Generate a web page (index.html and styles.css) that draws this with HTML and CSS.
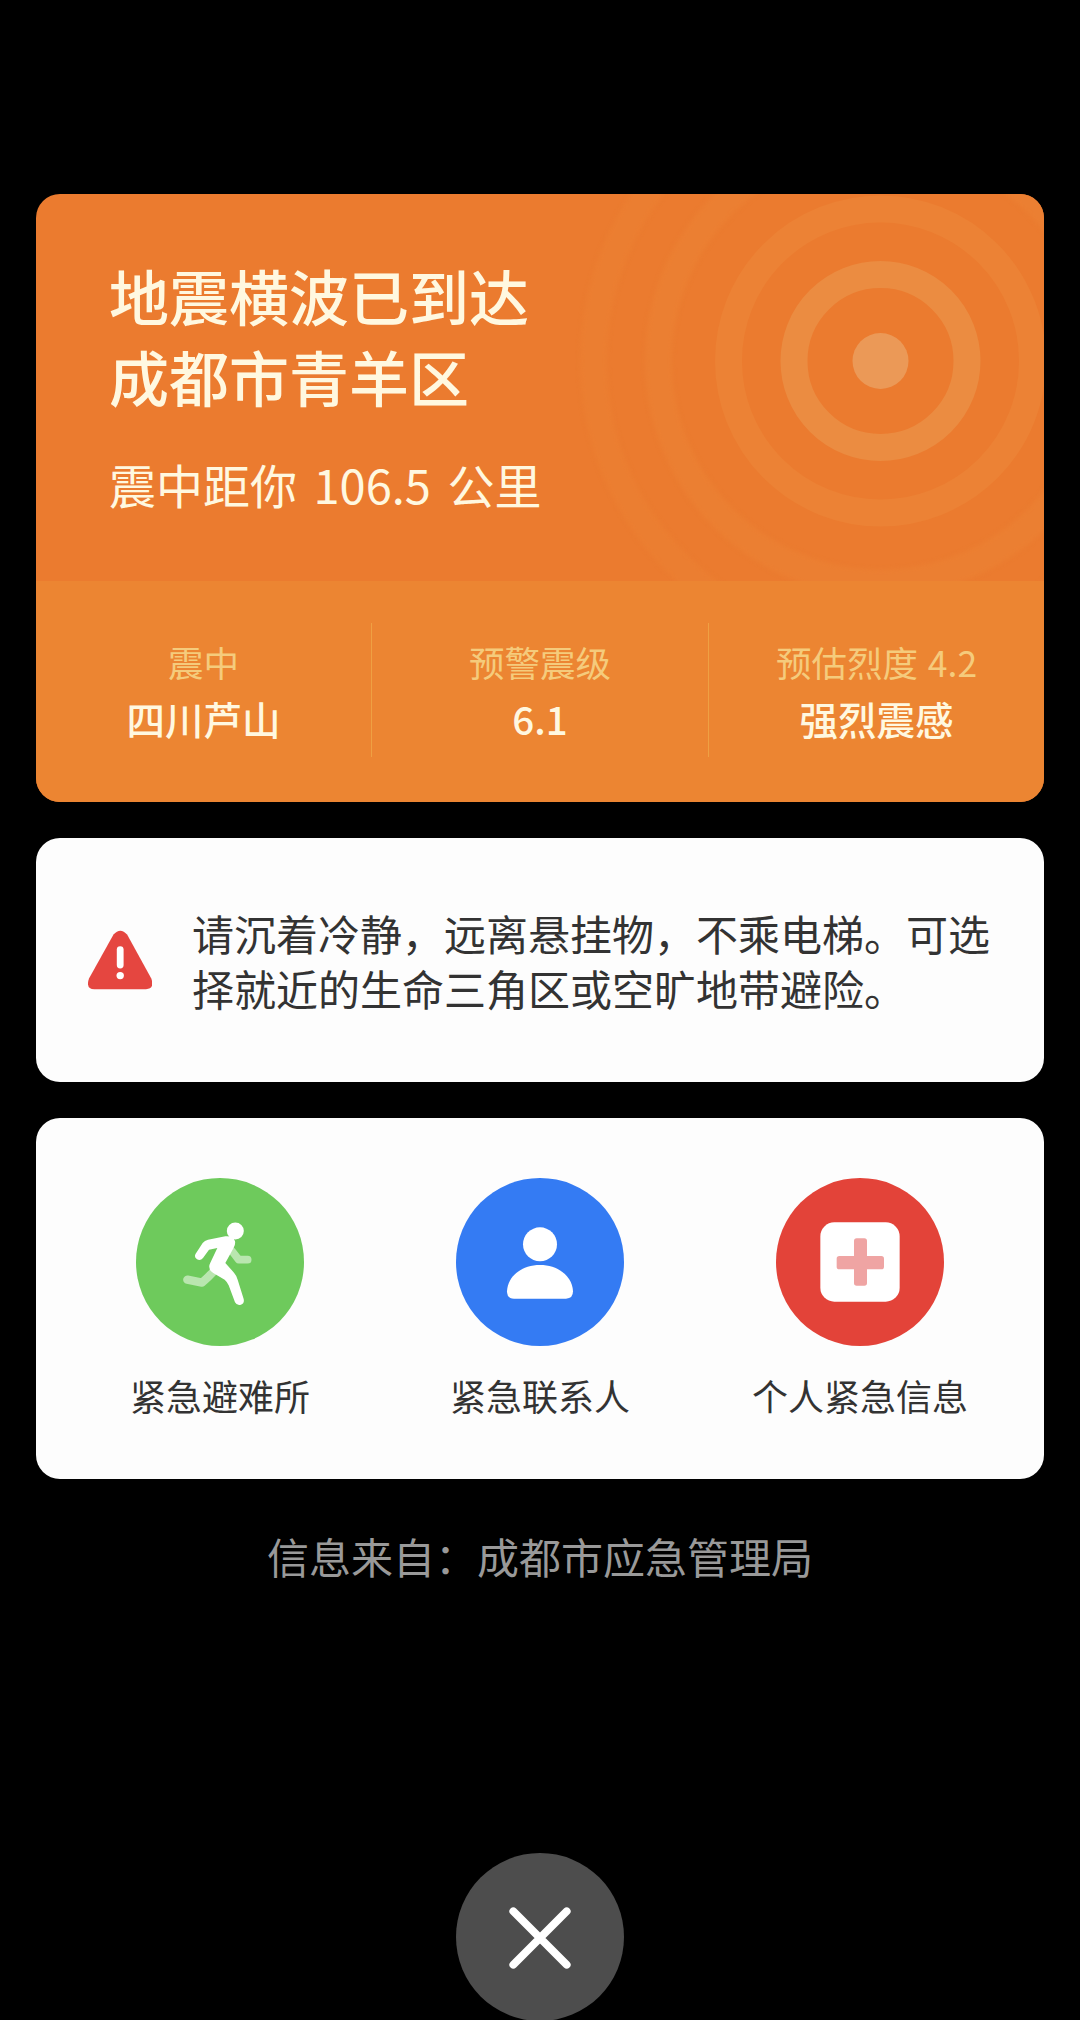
FILE: index.html
```html
<!DOCTYPE html>
<html lang="zh-CN">
<head>
<meta charset="utf-8">
<title>地震预警</title>
<link rel="stylesheet" href="styles.css">
</head>
<body>
<main class="screen">
  <section class="quake">
    <svg class="waves" viewBox="0 0 1008 387" aria-hidden="true">
      <circle class="wave wave-4" cx="844.5" cy="167" r="287"/>
      <circle class="wave wave-3" cx="844.5" cy="167" r="222"/>
      <circle class="wave wave-2" cx="844.5" cy="167" r="152"/>
      <circle class="wave wave-1" cx="844.5" cy="167" r="86.5"/>
      <circle class="core" cx="844.5" cy="167" r="28"/>
    </svg>
    <header class="summary">
      <h1 class="title">地震横波已到达<br>成都市青羊区</h1>
      <p class="distance">震中距你 106.5 公里</p>
    </header>
    <dl class="stats">
      <div class="stat"><dt>震中</dt><dd>四川芦山</dd></div>
      <div class="stat"><dt>预警震级</dt><dd>6.1</dd></div>
      <div class="stat"><dt>预估烈度 4.2</dt><dd>强烈震感</dd></div>
    </dl>
  </section>

  <section class="advice">
    <svg class="alert-icon" viewBox="88 930 64 60" aria-hidden="true">
      <path fill="#e54640" d="M113.500 934.500Q120.300 926.800 127.100 934.500L151.300 978.500Q154.900 988.800 146 989.200H94.300Q85.400 988.800 89 978.500Z"/>
      <path stroke="#fff" stroke-width="6.800" stroke-linecap="round" d="M120.200 949.600V965"/>
      <circle cx="120.200" cy="975.600" r="3.700" fill="#fff"/>
    </svg>
    <p class="advice-text">请沉着冷静，远离悬挂物，不乘电梯。可选<br>择就近的生命三角区或空旷地带避险。</p>
  </section>

  <nav class="actions">
    <a class="action">
      <svg class="action-icon" viewBox="48 53 504 504" aria-hidden="true">
        <circle cx="300" cy="305" r="252" fill="#6eca5c"/>
        <g fill="none" stroke="#b9e6af" stroke-linecap="round" stroke-linejoin="round">
          <path stroke-width="23" d="M336 272L356 298H383"/>
          <path stroke-width="25" d="M202 358L246 367Q264 352 282 332"/>
        </g>
        <circle cx="346" cy="212" r="25.500" fill="#fff"/>
        <path fill="#fff" d="M248 248Q254 241 264 238L316 228Q340 226 345 243Q347 252 341 262L316 308L342 337Q350 346 353 358L371 416Q374 429 363 433Q351 437 345 426L326 375Q322 365 314 358L281 339Q261 326 271 307L292 263L267 268L249 293Q241 303 231 297Q221 290 227 280Z"/>
      </svg>
      <span>紧急避难所</span>
    </a>
    <a class="action">
      <svg class="action-icon" viewBox="48 53 504 504" aria-hidden="true">
        <circle cx="300" cy="305" r="252" fill="#347bf3"/>
        <circle cx="300" cy="252" r="51" fill="#fff"/>
        <path fill="#fff" d="M222 415Q201 415 201 393C203 347 246 314 300 314S397 347 399 393Q399 415 378 415Z"/>
      </svg>
      <span>紧急联系人</span>
    </a>
    <a class="action">
      <svg class="action-icon" viewBox="48 53 504 504" aria-hidden="true">
        <circle cx="300" cy="305" r="252" fill="#e34339"/>
        <rect x="181" y="186" width="238" height="238" rx="42" fill="#fff"/>
        <rect x="282" y="234" width="39" height="142" rx="8" fill="#efa4a3"/>
        <rect x="230" y="287" width="142" height="40" rx="8" fill="#efa4a3"/>
      </svg>
      <span>个人紧急信息</span>
    </a>
  </nav>

  <p class="source">信息来自：成都市应急管理局</p>

  <button class="close" aria-label="关闭">
    <svg class="close-icon" viewBox="0 0 62 62" aria-hidden="true">
      <path stroke="#fff" stroke-width="7.800" stroke-linecap="round" d="M4.300 4.300L57.700 57.700M57.700 4.300L4.300 57.700"/>
    </svg>
  </button>
</main>
</body>
</html>
```
FILE: styles.css
```css
* {
  box-sizing: border-box;
}

body,
h1,
p,
dl,
dd {
  margin: 0;
}

body {
  background: #000;
  font-family: "Noto Sans CJK SC", sans-serif;
  text-spacing-trim: space-all;
}

.screen {
  display: flex;
  flex-direction: column;
  height: 2020px;
  padding: 194px 36px 0;
  overflow: hidden;
}

.quake {
  position: relative;
  flex: none;
  height: 608px;
  border-radius: 24px;
  background: #eb7b2f;
  color: #fff8e0;
  overflow: hidden;
}

/* Seismic rings behind the headline */
.waves {
  position: absolute;
  top: 0;
  left: 0;
  width: 1008px;
  height: 387px;
}

.wave {
  fill: none;
  stroke-width: 27px;
}

.wave-1 { stroke: #eb8c41; }
.wave-2 { stroke: #ec8235; }

.wave-3 {
  stroke: #eb7f32;
  filter: blur(2px);
}

.wave-4 {
  stroke: #eb7e31;
  filter: blur(2px);
}

.core {
  fill: #eb9957;
}

.summary {
  position: relative;
  height: 387px;
  padding: 60px 73px 0;
}

.title {
  font-size: 60px;
  font-weight: 500;
  line-height: 81px;
}

.distance {
  margin-top: 38px;
  font-size: 47px;
  line-height: 60px;
  word-spacing: 6px;
}

.stats {
  position: relative;
  display: grid;
  grid-template-columns: 335px 337px 336px;
  height: 221px;
  padding: 42px 0 45px;
  background: #ec8532;
  text-align: center;
}

.stat {
  padding-top: 17px;
}

.stat + .stat {
  border-left: 1px solid #efa043;
}

.stat dt {
  color: #f5cb7c;
  font-size: 35.5px;
  line-height: 44px;
  word-spacing: 2px;
}

.stat dd {
  margin-top: 10px;
  font-size: 38.5px;
  font-weight: 500;
  line-height: 48px;
}

.advice {
  display: flex;
  flex: none;
  align-items: center;
  gap: 40px;
  height: 244px;
  margin-top: 36px;
  padding: 0 52px;
  border-radius: 24px;
  background: #fdfdfd;
}

.alert-icon {
  flex: none;
  width: 64px;
  height: 60px;
}

.advice-text {
  color: #333;
  font-size: 42px;
  line-height: 55px;
  white-space: nowrap;
}

.actions {
  display: grid;
  flex: none;
  grid-template-columns: repeat(3, 1fr);
  height: 361px;
  margin-top: 36px;
  padding: 60px 24px 0;
  border-radius: 24px;
  background: #fdfdfd;
}

.action {
  display: flex;
  flex-direction: column;
  align-items: center;
  gap: 27px;
  color: #333;
  font-size: 36px;
  line-height: 44px;
}

.action-icon {
  width: 168px;
  height: 168px;
}

.source {
  margin-top: 50px;
  color: #999;
  font-size: 42px;
  line-height: 54px;
  text-align: center;
}

.close {
  display: flex;
  flex: none;
  align-items: center;
  justify-content: center;
  align-self: center;
  width: 168px;
  height: 168px;
  margin-top: 270px;
  padding: 2px 0 0;
  border: 0;
  border-radius: 50%;
  background: #4d4d4d;
}

.close-icon {
  width: 62px;
  height: 62px;
}
```
